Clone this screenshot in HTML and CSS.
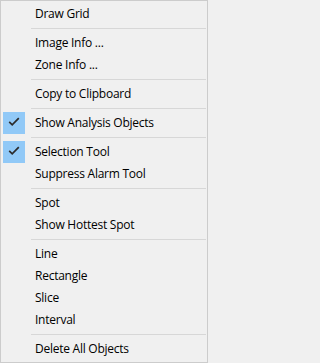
FILE: index.html
```html
<!DOCTYPE html>
<html>
<head>
<meta charset="utf-8">
<link rel="stylesheet" href="styles.css">
</head>
<body>
<div class="menu">
  <div class="item"><span class="mark"></span><span class="label">Draw Grid</span></div>
  <div class="sep"></div>
  <div class="item"><span class="mark"></span><span class="label">Image Info ...</span></div>
  <div class="item"><span class="mark"></span><span class="label">Zone Info ...</span></div>
  <div class="sep"></div>
  <div class="item"><span class="mark"></span><span class="label">Copy to Clipboard</span></div>
  <div class="sep"></div>
  <div class="item"><span class="mark checked"><svg width="22" height="22" viewBox="0 0 22 22"><path d="M6.2 9.8 L9.2 12.8 L15.8 6.2" fill="none" stroke="#2b2b2b" stroke-width="1.7"/></svg></span><span class="label">Show Analysis Objects</span></div>
  <div class="sep"></div>
  <div class="item"><span class="mark checked"><svg width="22" height="22" viewBox="0 0 22 22"><path d="M6.2 9.8 L9.2 12.8 L15.8 6.2" fill="none" stroke="#2b2b2b" stroke-width="1.7"/></svg></span><span class="label">Selection Tool</span></div>
  <div class="item"><span class="mark"></span><span class="label">Suppress Alarm Tool</span></div>
  <div class="sep"></div>
  <div class="item"><span class="mark"></span><span class="label">Spot</span></div>
  <div class="item"><span class="mark"></span><span class="label">Show Hottest Spot</span></div>
  <div class="sep"></div>
  <div class="item"><span class="mark"></span><span class="label">Line</span></div>
  <div class="item"><span class="mark"></span><span class="label">Rectangle</span></div>
  <div class="item"><span class="mark"></span><span class="label">Slice</span></div>
  <div class="item"><span class="mark"></span><span class="label">Interval</span></div>
  <div class="sep"></div>
  <div class="item"><span class="mark"></span><span class="label">Delete All Objects</span></div>
</div>
</body>
</html>
```
FILE: styles.css
```css
html, body {
  margin: 0;
  padding: 0;
  background: #f0f0f0;
}
.menu {
  box-sizing: border-box;
  width: 208px;
  height: 363px;
  border: 1px solid #cccccc;
  padding: 2px 0 2px 0;
  background: #f0f0f0;
  font-family: "Open Sans", "Noto Sans", sans-serif;
  font-size: 12px;
  letter-spacing: -0.25px;
  color: #000;
}
.item {
  display: flex;
  align-items: center;
  height: 22px;
}
.mark {
  width: 22px;
  height: 22px;
  margin-left: 2px;
  margin-right: 10px;
  flex: none;
}
.mark svg {
  display: block;
}
.mark.checked {
  background: #91c9f7;
}
.label {
  line-height: 22px;
  white-space: nowrap;
}
.sep {
  height: 1px;
  margin: 3px 1px 3px 30px;
  background: #d7d7d7;
}
```
